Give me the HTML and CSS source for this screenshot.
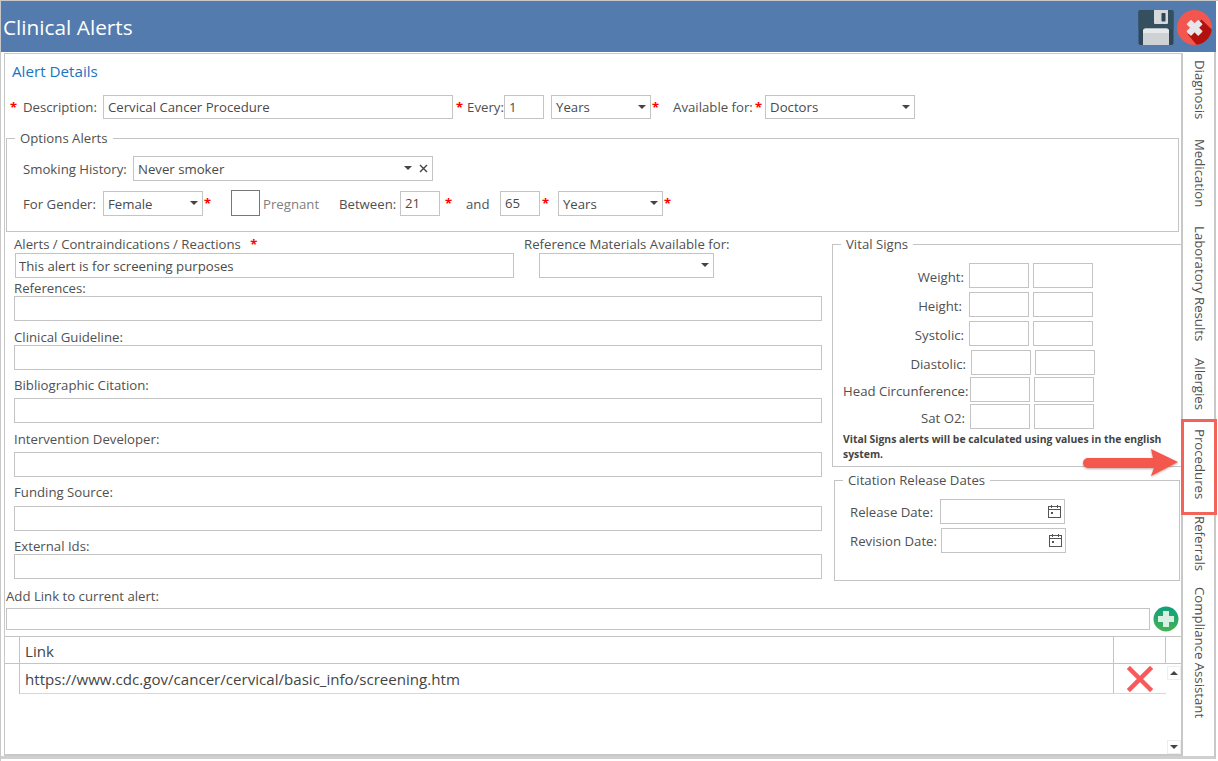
FILE: index.html
```html
<!DOCTYPE html>
<html lang="en">
<head>
<meta charset="utf-8">
<title>Clinical Alerts</title>
<link rel="stylesheet" href="styles.css">
</head>
<body>
<div class="window">
  <header class="titlebar">
    <h1>Clinical Alerts</h1>
    <div class="title-actions">
      <svg class="ico-save" width="36" height="35" viewBox="0 0 36 35"><rect x="0.5" y="0" width="35" height="35" rx="2" fill="#2f4858"/><rect x="0.5" y="0" width="35" height="19" rx="2" fill="#34505f"/><path d="M16 0h14v13a1 1 0 0 1-1 1H17a1 1 0 0 1-1-1z" fill="#d5d9dc"/><rect x="23.500" y="3" width="4" height="8.500" rx="0.800" fill="#2f4858"/><path d="M5 35V21a2.500 2.500 0 0 1 2.500-2.500h21A2.500 2.500 0 0 1 31 21v14z" fill="#ced2d4"/><path d="M5 23V21a2.500 2.500 0 0 1 2.500-2.500h21A2.500 2.500 0 0 1 31 21v2z" fill="#e6e8e9"/></svg>
      <svg class="ico-close" width="35" height="35" viewBox="0 0 35 35"><circle cx="17.500" cy="17.500" r="17.500" fill="#f2564e"/><path d="M11 24.500 24.500 9.500 34.800 19.500A17.500 17.500 0 0 1 19.500 34.800z" fill="#b3110e"/><path d="M10.500 14.200 14 10.700 17.600 14.300 21.200 10.700 24.700 14.200 21.100 17.800 24.700 21.400 21.200 24.900 17.600 21.300 14 24.900 10.500 21.400 14.100 17.800z" fill="#e4e7ec" stroke="#e4e7ec" stroke-width="1.500" stroke-linejoin="round"/></svg>
    </div>
  </header>
  <div class="workspace">
    <main class="panel">
      <h2 class="section-title">Alert Details</h2>
      <div class="row row-details">
        <span class="req req-first">*</span><label class="lbl lbl-desc">Description:</label>
        <input class="inp w-desc" value="Cervical Cancer Procedure">
        <span class="req req-every">*</span><label class="lbl lbl-every">Every:</label>
        <input class="inp w-every" value="1">
        <div class="sel w-years m-years"><span>Years</span><i class="caret"></i></div>
        <span class="req req-tight">*</span>
        <label class="lbl lbl-avail">Available for:</label><span class="req req-tight">*</span>
        <div class="sel w-doctors"><span>Doctors</span><i class="caret"></i></div>
      </div>
      <fieldset class="box box-options">
        <legend>Options Alerts</legend>
        <div class="row row-smoking">
          <label class="lbl">Smoking History:</label>
          <div class="sel w-smoke"><span>Never smoker</span><i class="caret"></i><svg class="clear" width="9" height="9" viewBox="0 0 9 9"><path d="M1 1 8 8M8 1 1 8" stroke="#444" stroke-width="1.400"/></svg></div>
        </div>
        <div class="row row-gender">
          <label class="lbl">For Gender:</label>
          <div class="sel w-gender"><span>Female</span><i class="caret"></i></div>
          <span class="req req-tight">*</span>
          <span class="check"></span>
          <label class="lbl lbl-preg">Pregnant</label>
          <label class="lbl lbl-between">Between:</label>
          <input class="inp w-age" value="21">
          <span class="req req-age">*</span>
          <label class="lbl lbl-and">and</label>
          <input class="inp w-age" value="65">
          <span class="req req-age2">*</span>
          <div class="sel w-years2"><span>Years</span><i class="caret"></i></div>
          <span class="req req-tight">*</span>
        </div>
      </fieldset>
      <div class="columns">
        <section class="col-left">
          <div class="row-alerts">
            <div class="alert-field">
              <label class="lbl">Alerts / Contraindications / Reactions <span class="req req-inline">*</span></label>
              <input class="inp w-alert" value="This alert is for screening purposes">
            </div>
            <div class="ref-field">
              <label class="lbl">Reference Materials Available for:</label>
              <div class="sel w-ref"><i class="caret"></i></div>
            </div>
          </div>
          <div class="field f-refs"><label class="lbl">References:</label><input class="inp w-full"></div>
          <div class="field"><label class="lbl">Clinical Guideline:</label><input class="inp w-full"></div>
          <div class="field f-low"><label class="lbl">Bibliographic Citation:</label><input class="inp w-full"></div>
          <div class="field f-low2"><label class="lbl">Intervention Developer:</label><input class="inp w-full"></div>
          <div class="field f-low3"><label class="lbl">Funding Source:</label><input class="inp w-full"></div>
          <div class="field f-last"><label class="lbl">External Ids:</label><input class="inp w-full"></div>
        </section>
        <aside class="col-right">
          <fieldset class="box box-vitals">
            <legend>Vital Signs</legend>
            <div class="vital v1"><label class="lbl">Weight:</label><input class="inp w-vital"><input class="inp w-vital"></div>
            <div class="vital v1 v-height"><label class="lbl">Height:</label><input class="inp w-vital"><input class="inp w-vital"></div>
            <div class="vital v1"><label class="lbl">Systolic:</label><input class="inp w-vital"><input class="inp w-vital"></div>
            <div class="vital v2"><label class="lbl">Diastolic:</label><input class="inp w-vital"><input class="inp w-vital"></div>
            <div class="vital v3 tight"><label class="lbl">Head Circunference:</label><input class="inp w-vital"><input class="inp w-vital"></div>
            <div class="vital v3 tight"><label class="lbl">Sat O2:</label><input class="inp w-vital"><input class="inp w-vital"></div>
            <p class="note">Vital Signs alerts will be calculated using values in the english system.</p>
          </fieldset>
          <fieldset class="box box-dates">
            <legend>Citation Release Dates</legend>
            <div class="date-row"><label class="lbl">Release Date:</label>
              <div class="sel w-date"><svg class="cal" width="13" height="13" viewBox="0 0 13 13" fill="none" stroke="#555"><rect x="0.500" y="1.500" width="12" height="11"/><path d="M0.500 4.500h12M3.500 0v3M9.500 0v3"/><rect x="3" y="7" width="2" height="2" fill="#555" stroke="none"/></svg></div></div>
            <div class="date-row d2"><label class="lbl">Revision Date:</label>
              <div class="sel w-date"><svg class="cal" width="13" height="13" viewBox="0 0 13 13" fill="none" stroke="#555"><rect x="0.500" y="1.500" width="12" height="11"/><path d="M0.500 4.500h12M3.500 0v3M9.500 0v3"/><rect x="3" y="7" width="2" height="2" fill="#555" stroke="none"/></svg></div></div>
          </fieldset>
        </aside>
      </div>
      <label class="lbl lbl-link">Add Link to current alert:</label>
      <div class="link-row">
        <input class="inp w-link">
        <svg width="26" height="26" viewBox="0 0 26 26"><defs><linearGradient id="g" x1="0" y1="0" x2="0" y2="1"><stop offset="0" stop-color="#0f9f7c"/><stop offset="1" stop-color="#45b354"/></linearGradient></defs><circle cx="13" cy="13" r="12.500" fill="url(#g)"/><path d="M10 5h6v5h5v6h-5v5h-6v-5H5v-6h5z" fill="#d9efe4"/></svg>
      </div>
      <div class="grid">
        <div class="grid-head">
          <div class="c-ind"></div><div class="c-link">Link</div><div class="c-act"></div><div class="c-sb"></div>
        </div>
        <div class="grid-body">
          <div class="grid-rows">
            <div class="grid-row">
              <div class="c-ind"></div>
              <div class="c-link">https://www.cdc.gov/cancer/cervical/basic_info/screening.htm</div>
              <div class="c-act c-act-body"><svg width="26" height="26" viewBox="0 0 26 26"><path d="M3 3 23 23M23 3 3 23" stroke="#f8595a" stroke-width="4.500" stroke-linecap="square"/></svg></div>
            </div>
          </div>
          <div class="scrollbar">
            <span class="sb-btn"><i class="tri-up"></i></span>
            <span class="sb-btn"><i class="caret"></i></span>
          </div>
        </div>
      </div>
    </main>
    <nav class="tabs">
      <span>Diagnosis</span>
      <span>Medication</span>
      <span>Laboratory Results</span>
      <span>Allergies</span>
      <span>Procedures</span>
      <span>Referrals</span>
      <span>Compliance Assistant</span>
    </nav>
  </div>
  <div class="callout-box"></div>
  <svg class="callout-arrow" width="98" height="44" viewBox="0 0 98 44"><path d="M5 17H70L68 8 95 21 68 35 71 27H5a5 5 0 0 1 0-10z" fill="#f4584c"/></svg>
</div>
</body>
</html>
```
FILE: styles.css
```css
* { box-sizing: border-box; }
html, body { margin: 0; padding: 0; background: #fff; }
body { font-family: "Open Sans", "Noto Sans", sans-serif; font-size: 13.2px; color: #4a4a4a; }
.window { position: relative; width: 1218px; height: 761px; overflow: hidden; border-top: 1px solid #c8c8c8; border-left: 1px solid #c8c8c8; }
.titlebar { width: 1215px; height: 51px; background: #537bae; color: #fff; display: flex; align-items: center; justify-content: space-between; padding: 0 4px 0 2px; }
.titlebar h1 { margin: 0; font-size: 20.8px; font-weight: 400; }
.title-actions { display: flex; gap: 3px; align-items: center; margin-top: 1px; }
.workspace { display: flex; height: 707px; width: 1215px; border-right: 2px solid #c8c8c8; border-bottom: 3px solid #d0d0d0; }
.panel { width: 1179px; height: 703px; margin: 1px 0 0 3px; border: 1px solid #c8c8c8; border-bottom-width: 2px; border-right-width: 2px; background: #fff; flex: none; }
.section-title { margin: 5px 0 0 7px; height: 24px; line-height: 24px; font-size: 15.2px; font-weight: 400; color: #1a74c4; }
.row { display: flex; align-items: center; }
.row-details { margin-top: 12px; height: 24px; margin-left: 5px; }
.row-gender .lbl { padding-top: 1px; }
.row-gender .sel span { padding-top: 1px; }
.lbl { display: block; line-height: 16px; white-space: nowrap; color: #505050; }
.req { color: #f00; font-weight: 700; font-size: 13px; line-height: 14px; }
.req-first { width: 13px; }
.lbl-desc { width: 80px; }
.req-every { margin: 0 4px 0 3px; }
.lbl-every { width: 37px; }
.inp { display: block; height: 25px; border: 1px solid #c4c4c4; background: #fff; padding: 0 4px; font: inherit; color: #4a4a4a; outline: none; margin: 0; }
.sel { display: flex; align-items: center; position: relative; height: 25px; border: 1px solid #c4c4c4; background: #fff; padding: 0 4px; color: #4a4a4a; flex: none; }
.sel span { flex: 1; }
.caret { display: block; width: 0; height: 0; border-left: 4.500px solid transparent; border-right: 4.500px solid transparent; border-top: 4.500px solid #444; }
.sel > .caret { position: absolute; right: 4px; top: 9px; }
.w-desc { width: 350px; height: 24px; }
.w-every { width: 40px; height: 24px; }
.m-years { margin-left: 7px; }
.w-years { width: 100px; height: 24px; }
.req-tight { width: 9px; margin-left: 1px; }
.lbl-avail { margin-left: 12px; width: 81px; }
.w-doctors { width: 150px; height: 24px; margin-left: 1px; }
.box { margin: 0; padding: 0; border: 1px solid #c4c4c4; min-width: 0; }
.box legend { padding: 0 5px; line-height: 16px; color: #505050; }
.box-options { height: 102px; margin: 11px 2px 0 1px; padding: 0 0 0 16px; }
.box-options legend { margin-left: -8px; }
.row-smoking { margin-top: 10px; }
.row-smoking .lbl { width: 110px; }
.w-smoke { width: 300px; height: 25px; }
.w-smoke > .caret { right: 20px; }
.clear { position: absolute; right: 4px; top: 7px; }
.row-gender { margin-top: 9px; height: 26px; }
.row-gender .lbl:first-child { width: 80px; }
.w-gender { width: 100px; }
.check { display: block; width: 29px; height: 26px; border: 1px solid #777; margin-left: 18px; }
.lbl-preg { margin-left: 3px; width: 76px; color: #808080; }
.lbl-between { width: 61px; }
.w-age { width: 40px; }
.req-age { width: 9px; margin-left: 5px; }
.lbl-and { margin-left: 12px; width: 34px; }
.req-age2 { width: 9px; margin-left: 2px; }
.w-years2 { width: 105px; margin-left: 7px; }
.columns { display: grid; grid-template-columns: 827px 350px; }
.col-left { padding: 4px 0 0 9px; }
.col-left .lbl, .lbl-link { line-height: 17px; margin-bottom: -1px; }
.row-alerts { display: flex; }
.alert-field { width: 510px; padding-left: 1px; }
.alert-field .lbl { margin-left: -1px; }
.alert-field .inp { margin-top: 1px; padding-left: 3px; }
.w-alert { width: 499px; }
.ref-field .sel { margin: 1px 0 0 15px; }
.w-ref { width: 175px; }
.field { margin-top: 8px; }
.w-full { width: 808px; }
.f-refs { margin-top: 2px; }
.f-low { margin-top: 7px; }
.col-left .f-low .lbl, .col-left .f-low2 .lbl { margin-bottom: 4px; }
.f-low3 { margin-top: 7px; }
.col-left .f-low3 .lbl { margin-bottom: 5px; }
.f-last { margin-top: 7px; }
.req-inline { margin-left: 6px; }
.col-right { padding-top: 4px; }
.box-vitals { height: 231px; border-right: 0; padding: 11px 0 0 10px; width: 349px; }
.box-vitals legend { margin-left: -2px; }
.vital { display: flex; gap: 4px; margin-top: 4px; align-items: center; }
.vital:first-of-type { margin-top: 0; }
.vital .lbl { text-align: right; padding-top: 3px; }
.w-vital { width: 60px; }
.v1 .lbl { width: 121px; margin-right: 1px; }
.v-height .lbl { width: 119px; margin-right: 3px; }
.v2 .lbl { width: 123px; margin-right: 1px; }
.v3 .lbl { width: 122px; margin-right: 1px; }
.tight { margin-top: 2px; }
.note { margin: 3px 10px 0 0; font-size: 10.400px; line-height: 15px; font-weight: 700; color: #444; }
.box-dates { height: 109px; width: 346px; margin: 5px 0 0 2px; padding: 11px 0 0 15px; }
.box-dates legend { margin-left: -7px; }
.date-row { display: flex; align-items: center; }
.date-row .lbl { width: 90px; padding-top: 1px; }
.d2 { margin-top: 4px; }
.d2 .lbl { width: 91px; }
.w-date { width: 125px; }
.cal { position: absolute; right: 3px; top: 5px; }
.lbl-link { margin: 7px 0 -1px 1px; }
.link-row { display: flex; align-items: center; gap: 3px; margin: 2px 0 0 1px; height: 26px; }
.w-link { width: 1144px; height: 22px; }
.grid { margin-top: 4px; height: 119px; border-top: 1px solid #c4c4c4; }
.grid-head { display: flex; height: 27px; border-bottom: 1px solid #c4c4c4; }
.c-ind { width: 15px; flex: none; border-right: 1px solid #c4c4c4; }
.c-link { width: 1094px; flex: none; padding-left: 5px; font-size: 15.1px; line-height: 27px; color: #444; border-right: 1px solid #c4c4c4; }
.grid-head .c-link { line-height: 28px; }
.c-act { width: 52px; flex: none; border-right: 1px solid #c4c4c4; }
.c-sb { flex: 1; }
.grid-body { display: flex; height: 91px; }
.grid-rows { width: 1161px; flex: none; }
.grid-row { display: flex; height: 30px; }
.grid-row .c-link { line-height: 30px; border-bottom: 1px solid #d8d8d8; }
.c-act-body { border-right: 0; border-bottom: 1px solid #d8d8d8; display: flex; align-items: center; justify-content: center; }
.scrollbar { flex: 1; display: flex; flex-direction: column; justify-content: space-between; padding: 2px 1px 1px 1px; }
.sb-btn { display: flex; align-items: center; justify-content: center; width: 14px; height: 14px; border: 1px solid #eee; }
.tri-up { display: block; width: 0; height: 0; border-left: 4.500px solid transparent; border-right: 4.500px solid transparent; border-bottom: 4.500px solid #444; }
.tabs { flex: 1; display: grid; grid-template-rows: 79px 87px 132px 71px 87px 71px 130px; justify-items: start; align-content: start; padding: 8px 0 0 9px; }
.tabs span { writing-mode: vertical-rl; line-height: 16px; font-size: 13.2px; color: #505050; white-space: nowrap; }
.callout-box { position: absolute; left: 1180px; top: 418px; width: 36px; height: 96px; border: 3px solid #f2645a; }
.callout-arrow { position: absolute; left: 1082px; top: 440px; filter: drop-shadow(0 1px 1px rgba(120, 60, 50, .45)); }
```
